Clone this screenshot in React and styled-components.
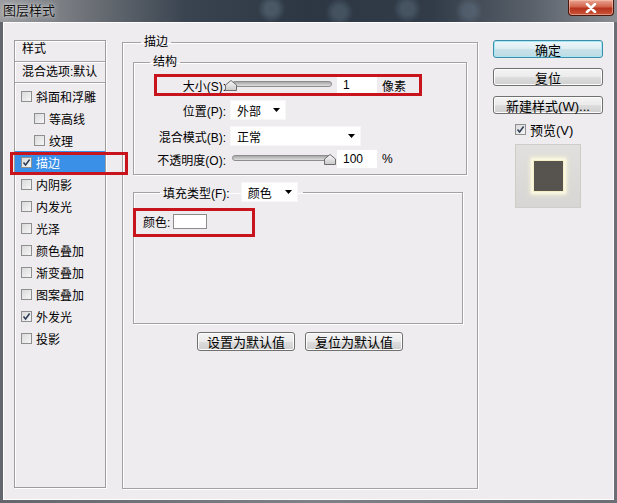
import styled, { createGlobalStyle } from "styled-components";

const GlobalStyle = createGlobalStyle`
  html, body {
    margin: 0;
    padding: 0;
    background: #6d7177;
  }
  body {
    font-family: "Liberation Sans", "Noto Sans CJK SC", sans-serif;
    font-size: 12px;
    color: #000;
  }
`;

const red = "#c8141c";

const Window = styled.div`
  width: 617px;
  height: 503px;
  display: flex;
  flex-direction: column;
  background: linear-gradient(90deg, #63676d 0%, #7e8288 50%, #6b6f75 100%);
  overflow: hidden;
`;

const TitleBar = styled.div`
  height: 22px;
  flex: none;
  display: flex;
  align-items: flex-start;
  justify-content: space-between;
  padding-left: 3px;
  background:
    radial-gradient(circle at 44% 40%, rgba(120, 140, 160, 0.35) 0 6px, transparent 14px),
    radial-gradient(circle at 55% 55%, rgba(120, 140, 160, 0.3) 0 6px, transparent 14px),
    radial-gradient(circle at 66% 40%, rgba(120, 140, 160, 0.3) 0 6px, transparent 14px),
    radial-gradient(circle at 76% 50%, rgba(120, 140, 160, 0.3) 0 6px, transparent 14px),
    linear-gradient(90deg, #9a9ca0 0%, #6e7278 14%, #3a4450 30%, #2c3743 50%, #313c48 70%, #59606a 86%, #8a8d92 100%);
`;

const Title = styled.div`
  font-size: 13px;
  line-height: 22px;
  color: #111;
  text-shadow: 0 0 6px rgba(255, 255, 255, 0.8), 0 0 2px rgba(255, 255, 255, 0.6);
`;

const CloseButton = styled.div`
  width: 46px;
  height: 16px;
  margin-right: 3px;
  box-sizing: border-box;
  display: flex;
  align-items: center;
  justify-content: center;
  border: 1px solid #4b1810;
  border-top: none;
  border-radius: 0 0 4px 4px;
  background: linear-gradient(#e9a592 0%, #d3644c 45%, #b7331e 55%, #c9553b 100%);
  box-shadow: inset 0 0 0 1px rgba(255, 210, 190, 0.5);
`;

const Body = styled.div`
  flex: 1;
  margin: 0 3px 3px 3px;
  box-sizing: border-box;
  border: 1px solid #fdfdfd;
  background: #efecef;
  display: flex;
  align-items: flex-start;
  padding: 11px 0 0 10px;
`;

/* left style list */
const StyleList = styled.div`
  width: 92px;
  height: 448px;
  margin-top: 6px;
  box-sizing: border-box;
  border: 1px solid #9d9d9d;
  box-shadow: 1px 1px 0 #fff, inset 1px 1px 0 #fff;
  flex: none;
`;

const ListHeader = styled.div`
  height: 21px;
  box-sizing: border-box;
  padding: ${(p) => (p.$first ? "0" : "2px")} 0 0 7px;
  line-height: 16px;
  border-bottom: 1px solid #a4a4a4;
  box-shadow: 0 1px 0 #fff;
  white-space: nowrap;
`;

const ListItems = styled.div`
  margin-top: 2px;
  display: flex;
  flex-direction: column;
`;

const ListItem = styled.div`
  position: relative;
  height: 22px;
  display: flex;
  align-items: center;
  gap: 4px;
  padding-left: ${(p) => (p.$sub ? 19 : 6)}px;
  background: ${(p) => (p.$selected ? "#3a8fe6" : "transparent")};
  color: ${(p) => (p.$selected ? "#fff" : "#000")};
  white-space: nowrap;

  ${(p) =>
    p.$marked &&
    `
    &::after {
      content: "";
      position: absolute;
      left: -5px;
      right: -23px;
      top: 1px;
      bottom: -2px;
      border: 3px solid ${red};
    }
  `}
`;

const Box = styled.span`
  width: 11px;
  height: 11px;
  box-sizing: border-box;
  flex: none;
  border: 1px solid #8e8f8f;
  background: linear-gradient(135deg, #dadada, #f6f6f6);
  display: inline-flex;
  align-items: center;
  justify-content: center;
`;

const Checkbox = ({ checked }) => (
  <Box>
    {checked && (
      <svg width="9" height="9" viewBox="0 0 9 9">
        <path d="M1.5 4.5 L3.6 7 L7.6 1.5" fill="none" stroke="#2b3b55" strokeWidth="1.5" />
      </svg>
    )}
  </Box>
);

/* middle group boxes */
const Group = styled.fieldset`
  margin: 0;
  min-width: 0;
  box-sizing: border-box;
  border: 1px solid #a2a2a2;
  box-shadow: 1px 1px 0 #fff, inset 1px 1px 0 #fff;
`;

const MainGroup = styled(Group)`
  width: 356px;
  height: 455px;
  margin-left: 16px;
  padding: 4px 10px 0 10px;
  flex: none;
`;

const Legend = styled.legend`
  padding: 0 3px;
  margin-left: ${(p) => p.$indent}px;
  line-height: 16px;
`;

const StructGroup = styled(Group)`
  padding: 4px 0 4px 0;
`;

const FillGroup = styled(Group)`
  margin: 7px 4px 0 0;
  padding: 0 0 94px 9px;
`;

const FillLegend = styled.legend`
  margin-left: 17px;
  padding: 0 5px 0 3px;
  display: flex;
  align-items: center;
  gap: 9px;
`;

const Row = styled.div`
  position: relative;
  height: 22px;
  margin-top: ${(p) => p.$top || 0}px;
  display: flex;
  align-items: center;

  ${(p) =>
    p.$marked &&
    `
    &::after {
      content: "";
      position: absolute;
      left: 20px;
      right: 44px;
      top: 0;
      bottom: 0;
      border: 3px solid ${red};
    }
  `}
`;

const Label = styled.span`
  width: 92px;
  flex: none;
  text-align: right;
  white-space: nowrap;
  margin-right: 2px;
`;

const SliderWrap = styled.div`
  position: relative;
  width: 104px;
  height: 22px;
  flex: none;
`;

const Track = styled.div`
  position: absolute;
  left: 4px;
  right: 0;
  top: 7px;
  height: 4px;
  border-radius: 3px;
  border: 1px solid #8d8d8d;
  background: linear-gradient(#a8a8a8, #dedede);
`;

const Thumb = styled.svg`
  position: absolute;
  top: 6px;
`;

const Slider = ({ value }) => (
  <SliderWrap>
    <Track />
    <Thumb width="12" height="11" viewBox="0 0 12 11" style={{ left: -3 + value * 99 }}>
      <defs>
        <linearGradient id="th" x1="0" y1="0" x2="0" y2="1">
          <stop offset="0" stopColor="#fafafa" />
          <stop offset="1" stopColor="#c9c9c9" />
        </linearGradient>
      </defs>
      <path d="M6 0.5 L11.5 5 L11.5 10.5 L0.5 10.5 L0.5 5 Z" fill="url(#th)" stroke="#6d6d6d" />
    </Thumb>
  </SliderWrap>
);

const NumberBox = styled.div`
  width: 40px;
  height: 18px;
  margin-left: 5px;
  box-sizing: border-box;
  padding-left: 6px;
  background: #fff;
  line-height: 18px;
  flex: none;
`;

const Unit = styled.span`
  margin-left: 5px;
`;

const Select = styled.div`
  width: ${(p) => p.$w}px;
  height: 20px;
  box-sizing: border-box;
  margin-left: 2px;
  padding: 0 5px 0 6px;
  background: #fff;
  border: 1px solid #f7f7f7;
  display: flex;
  align-items: center;
  justify-content: space-between;
  flex: none;
`;

const Arrow = () => (
  <svg width="7" height="4" viewBox="0 0 7 4">
    <path d="M0 0 H7 L3.5 4 Z" fill="#000" />
  </svg>
);

const ColorRow = styled.div`
  position: relative;
  margin-top: 11px;
  height: 16px;
  display: flex;
  align-items: center;
  gap: 3px;

  &::after {
    content: "";
    position: absolute;
    left: -10px;
    top: -5px;
    width: 122px;
    height: 29px;
    box-sizing: border-box;
    border: 3px solid ${red};
  }
`;

const Swatch = styled.span`
  width: 34px;
  height: 15px;
  box-sizing: border-box;
  border: 1px solid #8c8c8c;
  background: #fff;
`;

const DefaultsBar = styled.div`
  margin-top: 8px;
  display: flex;
  justify-content: center;
  gap: 10px;
`;

const Button = styled.div`
  width: ${(p) => p.$w || 110}px;
  height: ${(p) => p.$h || 18}px;
  box-sizing: border-box;
  border: 1px solid ${(p) => (p.$primary ? "#3d8ea8" : "#707070")};
  border-radius: 3px;
  background: ${(p) =>
    p.$primary
      ? "linear-gradient(#eef7fa 0%, #dcedf2 50%, #c9e2ea 51%, #bcdbe4 100%)"
      : "linear-gradient(#f4f4f4 0%, #ebebeb 50%, #dddddd 51%, #cfcfcf 100%)"};
  box-shadow: inset 0 0 0 1px ${(p) => (p.$primary ? "#a8e6f5" : "#fcfcfc")};
  display: flex;
  align-items: center;
  justify-content: center;
  font-size: 13px;
  white-space: nowrap;
  margin-top: ${(p) => p.$top || 0}px;
`;

/* right side */
const Side = styled.div`
  width: 110px;
  margin-left: 15px;
  margin-top: 6px;
  display: flex;
  flex-direction: column;
  flex: none;
`;

const PreviewCheck = styled.div`
  margin-top: 7px;
  padding-left: 22px;
  height: 16px;
  display: flex;
  align-items: center;
  gap: 4px;
  font-size: 13px;
`;

const PreviewBox = styled.div`
  margin: 7px 0 0 22px;
  width: 66px;
  height: 64px;
  box-sizing: border-box;
  border: 1px solid #cfcdca;
  background: linear-gradient(#e2e0de, #d8d6d4);
  display: flex;
  align-items: center;
  justify-content: center;
`;

const PreviewSquare = styled.div`
  width: 31px;
  height: 32px;
  box-sizing: border-box;
  background: #57534f;
  border: 1px solid #f4efc8;
  box-shadow: 0 0 2px 2px #fbf8e2, 0 0 5px 3px rgba(255, 250, 210, 0.6);
`;

const styleItems = [
  { name: "斜面和浮雕" },
  { name: "等高线", sub: true },
  { name: "纹理", sub: true },
  { name: "描边", checked: true, selected: true },
  { name: "内阴影" },
  { name: "内发光" },
  { name: "光泽" },
  { name: "颜色叠加" },
  { name: "渐变叠加" },
  { name: "图案叠加" },
  { name: "外发光", checked: true },
  { name: "投影" },
];

export default function App() {
  return (
    <>
      <GlobalStyle />
      <Window>
        <TitleBar>
          <Title>图层样式</Title>
          <CloseButton>
            <svg width="12" height="10" viewBox="0 0 12 10">
              <path d="M2 1 L10 9 M10 1 L2 9" stroke="#fff" strokeWidth="2.6" strokeLinecap="round" />
            </svg>
          </CloseButton>
        </TitleBar>

        <Body>
          <StyleList>
            <ListHeader $first>样式</ListHeader>
            <ListHeader>混合选项:默认</ListHeader>
            <ListItems>
              {styleItems.map((v) => (
                <ListItem key={v.name} $sub={v.sub} $selected={v.selected} $marked={v.selected}>
                  <Checkbox checked={v.checked} />
                  {v.name}
                </ListItem>
              ))}
            </ListItems>
          </StyleList>

          <MainGroup>
            <Legend $indent={8}>描边</Legend>

            <StructGroup>
              <Legend $indent={16}>结构</Legend>
              <Row $marked>
                <Label>大小(S):</Label>
                <Slider value={0} />
                <NumberBox>1</NumberBox>
                <Unit>像素</Unit>
              </Row>
              <Row $top={3}>
                <Label>位置(P):</Label>
                <Select $w={56}>
                  外部
                  <Arrow />
                </Select>
              </Row>
              <Row $top={4}>
                <Label>混合模式(B):</Label>
                <Select $w={131}>
                  正常
                  <Arrow />
                </Select>
              </Row>
              <Row $top={1}>
                <Label>不透明度(O):</Label>
                <Slider value={1} />
                <NumberBox>100</NumberBox>
                <Unit>%</Unit>
              </Row>
            </StructGroup>

            <FillGroup>
              <FillLegend>
                填充类型(F):
                <Select $w={57}>
                  颜色
                  <Arrow />
                </Select>
              </FillLegend>
              <ColorRow>
                颜色:
                <Swatch />
              </ColorRow>
            </FillGroup>

            <DefaultsBar>
              <Button $w={98} $h={19}>设置为默认值</Button>
              <Button $w={98} $h={19}>复位为默认值</Button>
            </DefaultsBar>
          </MainGroup>

          <Side>
            <Button $primary>确定</Button>
            <Button $top={10}>复位</Button>
            <Button $top={10}>新建样式(W)...</Button>
            <PreviewCheck>
              <Checkbox checked />
              预览(V)
            </PreviewCheck>
            <PreviewBox>
              <PreviewSquare />
            </PreviewBox>
          </Side>
        </Body>
      </Window>
    </>
  );
}
